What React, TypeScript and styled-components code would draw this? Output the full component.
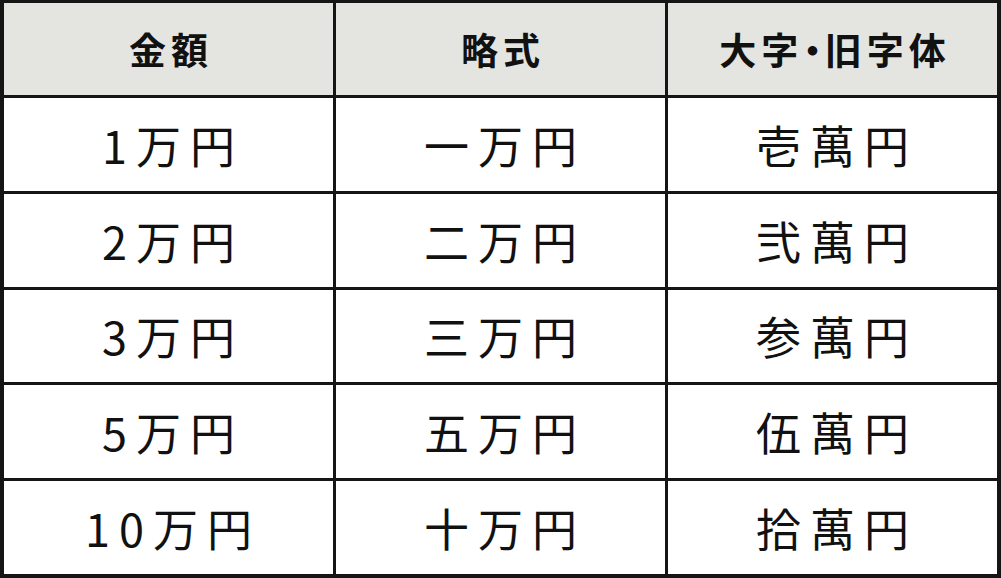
import React, { FC } from "react";
import styled, { createGlobalStyle } from "styled-components";

const GlobalStyle = createGlobalStyle`
  html, body {
    margin: 0;
    padding: 0;
    background: #ffffff;
  }
  body {
    font-family: "Noto Sans CJK JP", "Noto Sans", sans-serif;
  }
`;

const rows: [string, string, string][] = [
  ["1万円", "一万円", "壱萬円"],
  ["2万円", "二万円", "弐萬円"],
  ["3万円", "三万円", "参萬円"],
  ["5万円", "五万円", "伍萬円"],
  ["10万円", "十万円", "拾萬円"],
];

const App: FC = () => {
  return (
    <>
      <GlobalStyle />
      <Table>
        <HeadCell>金額</HeadCell>
        <HeadCell>略式</HeadCell>
        <HeadCell>
          大字<Dot>・</Dot>旧字体
        </HeadCell>
        {rows.map((row) =>
          row.map((text, i) => <BodyCell key={text + i}>{text}</BodyCell>)
        )}
      </Table>
    </>
  );
};

export default App;

const Table = styled.div`
  box-sizing: border-box;
  width: 1001px;
  height: 578px;
  display: grid;
  grid-template-columns: repeat(3, 1fr);
  grid-template-rows: 92px repeat(5, 1fr);
  gap: 3px;
  background: #151515;
  border: 4px solid #151515;
  border-top-width: 3px;
`;

const Cell = styled.div`
  display: flex;
  align-items: center;
  justify-content: center;
  color: #111111;
`;

const HeadCell = styled(Cell)`
  background: #e4e4e1;
  font-size: 37px;
  font-weight: 700;
  letter-spacing: 5px;
  padding-left: 5px;
`;

/* half-width middle dot, like the tight spacing in the header */
const Dot = styled.span`
  font-feature-settings: "halt";
  letter-spacing: 3px;
`;

const BodyCell = styled(Cell)`
  background: #ffffff;
  font-size: 45px;
  font-weight: 400;
  letter-spacing: 9px;
  padding-left: 9px;
`;
